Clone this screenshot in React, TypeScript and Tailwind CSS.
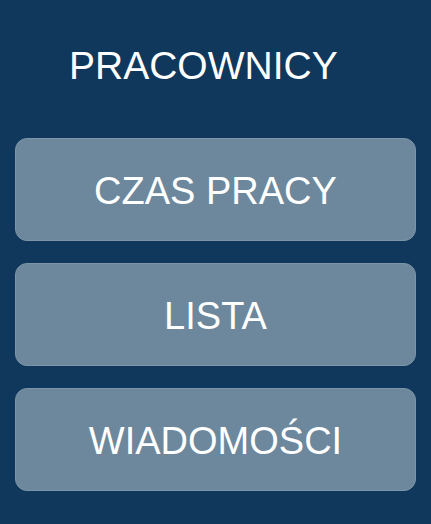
export default function App() {
  const items = ["CZAS PRACY", "LISTA", "WIADOMOŚCI"];
  return (
    <div className="w-[431px] h-[524px] bg-[#10385c] font-['Liberation_Sans',Arial,sans-serif] text-white">
      <div className="h-[138px] pl-[69px] pt-[43px]">
        <h1 className="text-[39px] leading-[46px]">PRACOWNICY</h1>
      </div>
      <div className="flex flex-col gap-[22px] px-[15px]">
        {items.map((t) => (
          <button
            key={t}
            className="h-[103px] rounded-[12px] bg-[#6d889c] border border-[#7d95a8] text-[38px] text-white flex items-center justify-center pt-[4px]"
          >
            {t}
          </button>
        ))}
      </div>
    </div>
  );
}
